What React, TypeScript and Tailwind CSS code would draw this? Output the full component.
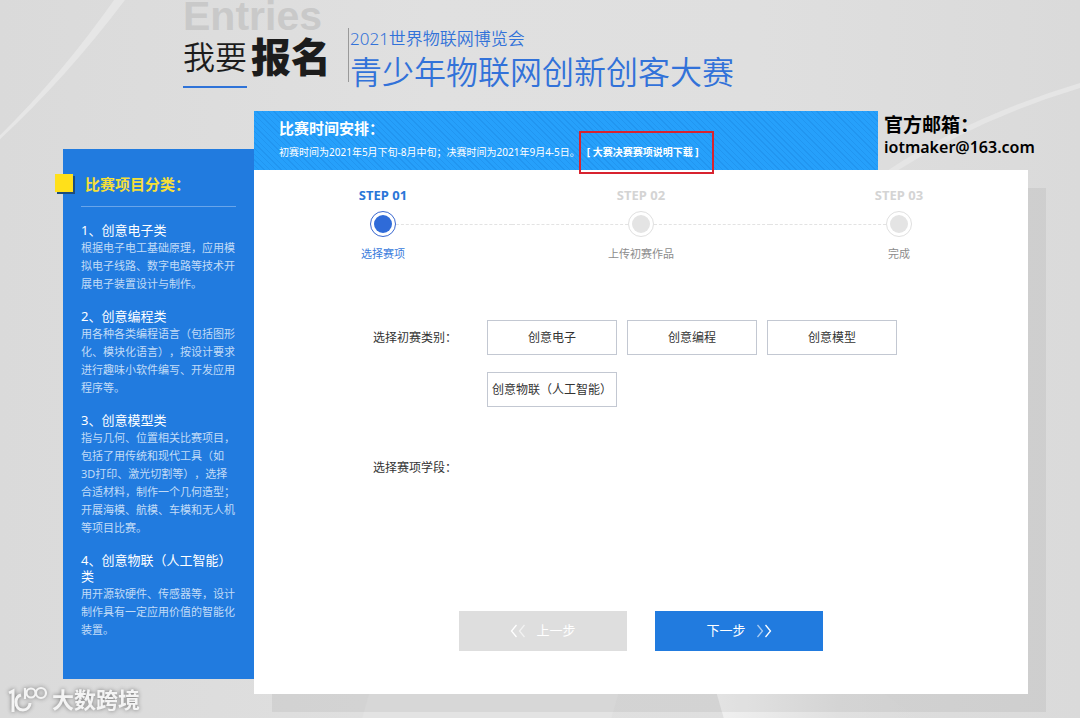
import React, { useState } from 'react';

interface Category {
  title: string;
  text: string;
}

const categories: Category[] = [
  { title: '1、创意电子类', text: '根据电子电工基础原理，应用模拟电子线路、数字电路等技术开展电子装置设计与制作。' },
  { title: '2、创意编程类', text: '用各种各类编程语言（包括图形化、模块化语言），按设计要求进行趣味小软件编写、开发应用程序等。' },
  { title: '3、创意模型类', text: '指与几何、位置相关比赛项目，包括了用传统和现代工具（如3D打印、激光切割等），选择合适材料，制作一个几何造型；开展海模、航模、车模和无人机等项目比赛。' },
  { title: '4、创意物联（人工智能）类', text: '用开源软硬件、传感器等，设计制作具有一定应用价值的智能化装置。' },
];

const steps = ['选择赛项', '上传初赛作品', '完成'];

const options = ['创意电子', '创意编程', '创意模型', '创意物联（人工智能）'];

const Backdrop: React.FC = () => (
  <svg className="absolute inset-0 w-full h-full" viewBox="0 0 1080 718" preserveAspectRatio="none" aria-hidden="true">
    <defs>
      <linearGradient id="base" x1="0" y1="0" x2="1" y2="0">
        <stop offset="0" stopColor="#dadada" />
        <stop offset="0.4" stopColor="#e0e0e0" />
        <stop offset="0.7" stopColor="#dfdfdf" />
        <stop offset="1" stopColor="#dadada" />
      </linearGradient>
      <linearGradient id="wedge" x1="0" y1="0" x2="1" y2="0">
        <stop offset="0" stopColor="#f0f0f0" />
        <stop offset="0.6" stopColor="#e0e0e0" />
        <stop offset="1" stopColor="#dfdfdf" stopOpacity="0" />
      </linearGradient>
    </defs>
    <rect width="1080" height="718" fill="url(#base)" />
    <path d="M114 0H125Q66 78 0 139V135Q62 74 114 0Z" fill="#e6e6e6" />
    <path d="M1080 83V88Q980 118 898 170H888Q970 116 1080 83Z" fill="#e5e5e5" />
    <path d="M716 690H880L920 718H724Z" fill="url(#wedge)" />
    <path d="M370 690H619L611 718H362Z" fill="#e3e3e3" />
  </svg>
);

const Chevrons: React.FC<{ back?: boolean }> = ({ back }) => (
  <svg width="16" height="14" viewBox="0 0 16 14" fill="none" stroke="#fff" strokeWidth="1.3" aria-hidden="true">
    {back ? (
      <>
        <path d="M6.5 1L1.5 7L6.5 13" />
        <path d="M14.5 1L9.5 7L14.5 13" opacity="0.6" />
      </>
    ) : (
      <>
        <path d="M1.5 1L6.5 7L1.5 13" opacity="0.6" />
        <path d="M9.5 1L14.5 7L9.5 13" />
      </>
    )}
  </svg>
);

const Header: React.FC = () => (
  <header className="flex items-start pl-[183px] pb-[21px] whitespace-nowrap">
    <div>
      <div className="font-['Liberation_Sans',sans-serif] font-bold text-[41px] leading-[33px] text-[#c9c9c9]">Entries</div>
      <h1 className="flex items-center gap-1 mt-1 leading-none text-[#1c1c1c]">
        <span className="text-[32px] font-[350]">我要</span>
        <span className="text-[40px] leading-none font-black">报名</span>
      </h1>
      <div className="w-16 h-[2px] mt-[9px] bg-[#2f73d8]" />
    </div>
    <div className="w-px h-[54px] mt-7 ml-[17px] bg-[#999]" />
    <div className="mt-7 ml-px text-[#3272d9] font-[350]">
      <p className="text-[17px] leading-[22px]">2021世界物联网博览会</p>
      <p className="mt-1 text-[32px] leading-9">青少年物联网创新创客大赛</p>
    </div>
  </header>
);

const Sidebar: React.FC = () => (
  <aside className="w-[191px] shrink-0 mt-[38px] mb-4 pt-[25px] pb-10 pl-[18px] pr-[18px] bg-[#217bdf]">
    <div className="flex items-start gap-3 -ml-[26px]">
      <span className="w-[18px] h-[18px] bg-[#ffe01a] shadow-[2px_2px_0_#1d4c7c]" />
      <h2 className="text-[15px] leading-5 font-bold text-[#f5df38]">比赛项目分类：</h2>
    </div>
    <div className="h-px mt-3 mb-[15px] bg-[#69a5ea]" />
    <div className="flex flex-col gap-[15px]">
      {categories.map(c => (
        <section key={c.title}>
          <h3 className="text-[13px] leading-4 text-white font-normal">{c.title}</h3>
          <p className="pt-px text-[11px] leading-[18px] text-[#c2dbf7]">{c.text}</p>
        </section>
      ))}
    </div>
  </aside>
);

const Banner: React.FC = () => (
  <div className="flex-1 h-[59px] pl-[25px] pt-[7px] text-white bg-[#26a0fb] bg-[repeating-linear-gradient(45deg,transparent_0_3px,rgba(0,80,170,0.13)_3px_4px)] whitespace-nowrap">
    <h2 className="text-[15px] leading-5 font-bold">比赛时间安排：</h2>
    <p className="mt-[5px] text-[10px] leading-[18px]">
      初赛时间为2021年5月下旬-8月中旬；决赛时间为2021年9月4-5日。
      <a href="#download" className="relative ml-[7px] font-bold">
        [ 大赛决赛赛项说明下载 ]
        <span className="absolute -left-2 -right-[15px] -top-[14px] h-[43px] border-2 border-[#d8232f]" />
      </a>
    </p>
  </div>
);

const Steps: React.FC = () => (
  <ol className="grid grid-cols-3 text-center">
    {steps.map((label, i) => {
      const active = i === 0;
      return (
        <li key={label}>
          <div className={`text-[13px] leading-4 font-bold ${active ? 'text-[#2a76d8]' : 'text-[#d4d4d4]'}`}>STEP 0{i + 1}</div>
          <div className="flex items-center mt-2">
            <span className={`flex-1 border-t border-dashed ${i > 0 ? 'border-[#e3e3e3]' : 'border-transparent'}`} />
            <span className={`flex items-center justify-center w-[26px] h-[26px] rounded-full border ${active ? 'border-[#3a68d0]' : 'border-[#e0e0e0]'}`}>
              <span className={`w-[18px] h-[18px] rounded-full ${active ? 'bg-[#2f6bd8]' : 'bg-[#e4e4e4]'}`} />
            </span>
            <span className={`flex-1 border-t border-dashed ${i < 2 ? 'border-[#e3e3e3]' : 'border-transparent'}`} />
          </div>
          <div className={`mt-[9px] text-[11px] leading-4 ${active ? 'text-[#3a7bdc]' : 'text-[#8c8c8c]'}`}>{label}</div>
        </li>
      );
    })}
  </ol>
);

const Watermark: React.FC = () => (
  <div className="absolute left-2 bottom-[6px] flex items-center gap-1 text-[#f4f4f4] drop-shadow-[0_0_2px_rgba(0,0,0,0.45)]">
    <svg width="40" height="28" viewBox="0 0 40 28" fill="none" stroke="currentColor" strokeWidth="3" aria-hidden="true">
      <path d="M1 8L5 6V27" />
      <path d="M13 10C9 11 8 14 8 17C8 22 11 25 15 25C19 25 22 22 22 18" />
      <path d="M17 3V14" strokeWidth="2.2" />
      <circle cx="23" cy="8" r="4.5" strokeWidth="2.2" />
      <circle cx="33" cy="8" r="5" strokeWidth="2.2" />
    </svg>
    <span className="text-[22px] leading-7 font-bold">大数跨境</span>
  </div>
);

const App: React.FC = () => {
  const [selected, setSelected] = useState<string | null>(null);

  return (
    <div className="relative min-h-screen overflow-hidden bg-[#dcdcdc] font-['Noto_Sans','Noto_Sans_CJK_SC',sans-serif] [text-spacing-trim:space-all]">
      <Backdrop />
      <div className="relative">
        <Header />
        <div className="flex pl-[63px] pr-[52px] pb-6">
          <Sidebar />
          <main className="flex-1 min-w-0">
            <div className="flex">
              <Banner />
              <address className="w-[150px] pl-[6px] pt-[2px] not-italic font-bold text-black whitespace-nowrap">
                <div className="text-[19px] leading-6">官方邮箱：</div>
                <a href="mailto:iotmaker@163.com" className="block text-[16px] leading-5 font-semibold">iotmaker@163.com</a>
              </address>
            </div>
            <div className="pt-[17px] pb-[43px] bg-white shadow-[18px_18px_0_rgba(0,0,0,0.05)]">
              <Steps />
              <div className="mt-[58px] pl-[119px] text-xs text-[#333]">
                <div className="flex" role="group" aria-labelledby="category-label">
                  <span id="category-label" className="w-[114px] shrink-0 leading-[35px]">选择初赛类别：</span>
                  <div className="flex flex-wrap gap-x-[10px] gap-y-[17px] max-w-[420px]">
                    {options.map(o => (
                      <button
                        key={o}
                        type="button"
                        aria-pressed={selected === o}
                        onClick={() => setSelected(o)}
                        className="w-[130px] h-[35px] border border-[#c3c8d2] bg-white whitespace-nowrap aria-pressed:border-[#217bdf]"
                      >
                        {o}
                      </button>
                    ))}
                  </div>
                </div>
                <div className="mt-[43px] leading-[35px]">选择赛项学段：</div>
              </div>
              <div className="flex justify-center gap-7 mt-[126px] text-[13px] text-white">
                <button type="button" disabled className="flex items-center justify-center gap-[10px] w-[168px] h-10 bg-[#dedede]">
                  <Chevrons back />
                  上一步
                </button>
                <button type="button" className="flex items-center justify-center gap-[10px] w-[168px] h-10 bg-[#217bdf]">
                  下一步
                  <Chevrons />
                </button>
              </div>
            </div>
          </main>
        </div>
      </div>
      <Watermark />
    </div>
  );
};

export default App;
